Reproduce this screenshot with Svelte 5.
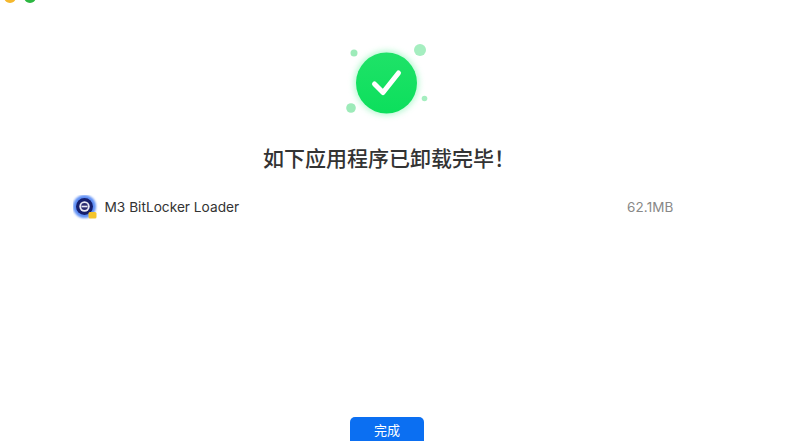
<script lang="ts">
  const app = { name: 'M3 BitLocker Loader', size: '62.1MB' }
</script>

<div class="window">
  <div class="lights">
    <span class="light yellow"></span>
    <span class="light green"></span>
  </div>

  <svg class="hero" width="100" height="84" viewBox="0 0 100 84" aria-hidden="true">
    <defs>
      <linearGradient id="disc" x1="0" y1="0" x2="0" y2="1">
        <stop offset="0" stop-color="#1fe268" />
        <stop offset="1" stop-color="#0cdf5c" />
      </linearGradient>
      <filter id="soft" x="-40%" y="-40%" width="180%" height="180%">
        <feGaussianBlur stdDeviation="3" />
      </filter>
      <filter id="halo" x="-30%" y="-30%" width="160%" height="160%">
        <feGaussianBlur stdDeviation="1" />
      </filter>
    </defs>
    <circle cx="14" cy="13" r="3.5" fill="#9debb9" />
    <circle cx="80" cy="10" r="6" fill="#a5eec0" />
    <circle cx="11" cy="68" r="4.8" fill="#9debb9" />
    <circle cx="84.500" cy="58.500" r="2.800" fill="#a5eec0" />
    <circle cx="46.500" cy="43" r="32" fill="#5ff09a" opacity="0.5" filter="url(#soft)" />
    <circle cx="46.500" cy="43" r="30.500" fill="url(#disc)" />
    <path d="M34.500 44 L43 52.500 L58.500 33" fill="none" stroke="#fff" stroke-width="5" stroke-linecap="round" stroke-linejoin="round" />
  </svg>

  <h1 class="title">如下应用程序已卸载完毕！</h1>

  <div class="row">
    <svg class="app-icon" width="25" height="25" viewBox="0 0 25 25" aria-hidden="true">
      <circle cx="11.500" cy="11.500" r="11.500" fill="#5f8ff5" filter="url(#halo)" />
      <circle cx="11.500" cy="11.500" r="8.500" fill="#161f6e" />
      <circle cx="11.500" cy="11.500" r="5.200" fill="#e8e8f4" />
      <circle cx="11.500" cy="11.500" r="3.400" fill="#2a2a70" />
      <rect x="8.500" y="10.700" width="6" height="1.600" fill="#e8e8f4" />
      <rect x="15.500" y="17" width="8" height="6.500" rx="1.500" fill="#f5c52c" />
    </svg>
    <span class="name">{app.name}</span>
    <span class="size">{app.size}</span>
  </div>

  <button class="done">完成</button>
</div>

<style>
  :global(body) {
    margin: 0;
    background: #fff;
    overflow: hidden;
  }

  .window {
    box-sizing: border-box;
    width: 785px;
    height: 441px;
    padding-right: 11px;
    overflow: hidden;
    display: flex;
    flex-direction: column;
    align-items: center;
    background: #fff;
    font-family: Inter, "Noto Sans CJK SC", sans-serif;
  }

  .lights {
    align-self: flex-start;
    display: flex;
    gap: 8px;
    height: 0;
    margin: -9px 0 0 4px;
  }

  .light {
    width: 12px;
    height: 12px;
    border-radius: 50%;
  }

  .yellow { background: #f5b82e; }
  .green { background: #2cb742; }

  .hero {
    display: block;
    margin: 49px 0 0 5px;
  }

  .title {
    margin: 17px 0 0 4px;
    font-family: "Noto Sans CJK SC", sans-serif;
    font-size: 21px;
    line-height: 32px;
    font-weight: 500;
    color: #333;
  }

  .row {
    width: 602px;
    margin: 21px 27px 0 0;
    display: flex;
    align-items: center;
    height: 26px;
  }

  .app-icon {
    display: block;
    flex: none;
  }

  .name {
    margin-left: 7px;
    font-size: 13.700px;
    color: #333;
  }

  .size {
    margin: 0 1px 0 auto;
    font-size: 13.500px;
    letter-spacing: 0.1px;
    color: #888;
  }

  .done {
    margin-top: auto;
    margin-bottom: -4px;
    width: 74px;
    height: 28px;
    padding: 0 0 2px;
    border: none;
    border-radius: 5px;
    background: #0b6ff2;
    color: #fff;
    font-family: "Noto Sans CJK SC", sans-serif;
    font-size: 13px;
    line-height: 26px;
  }
</style>
